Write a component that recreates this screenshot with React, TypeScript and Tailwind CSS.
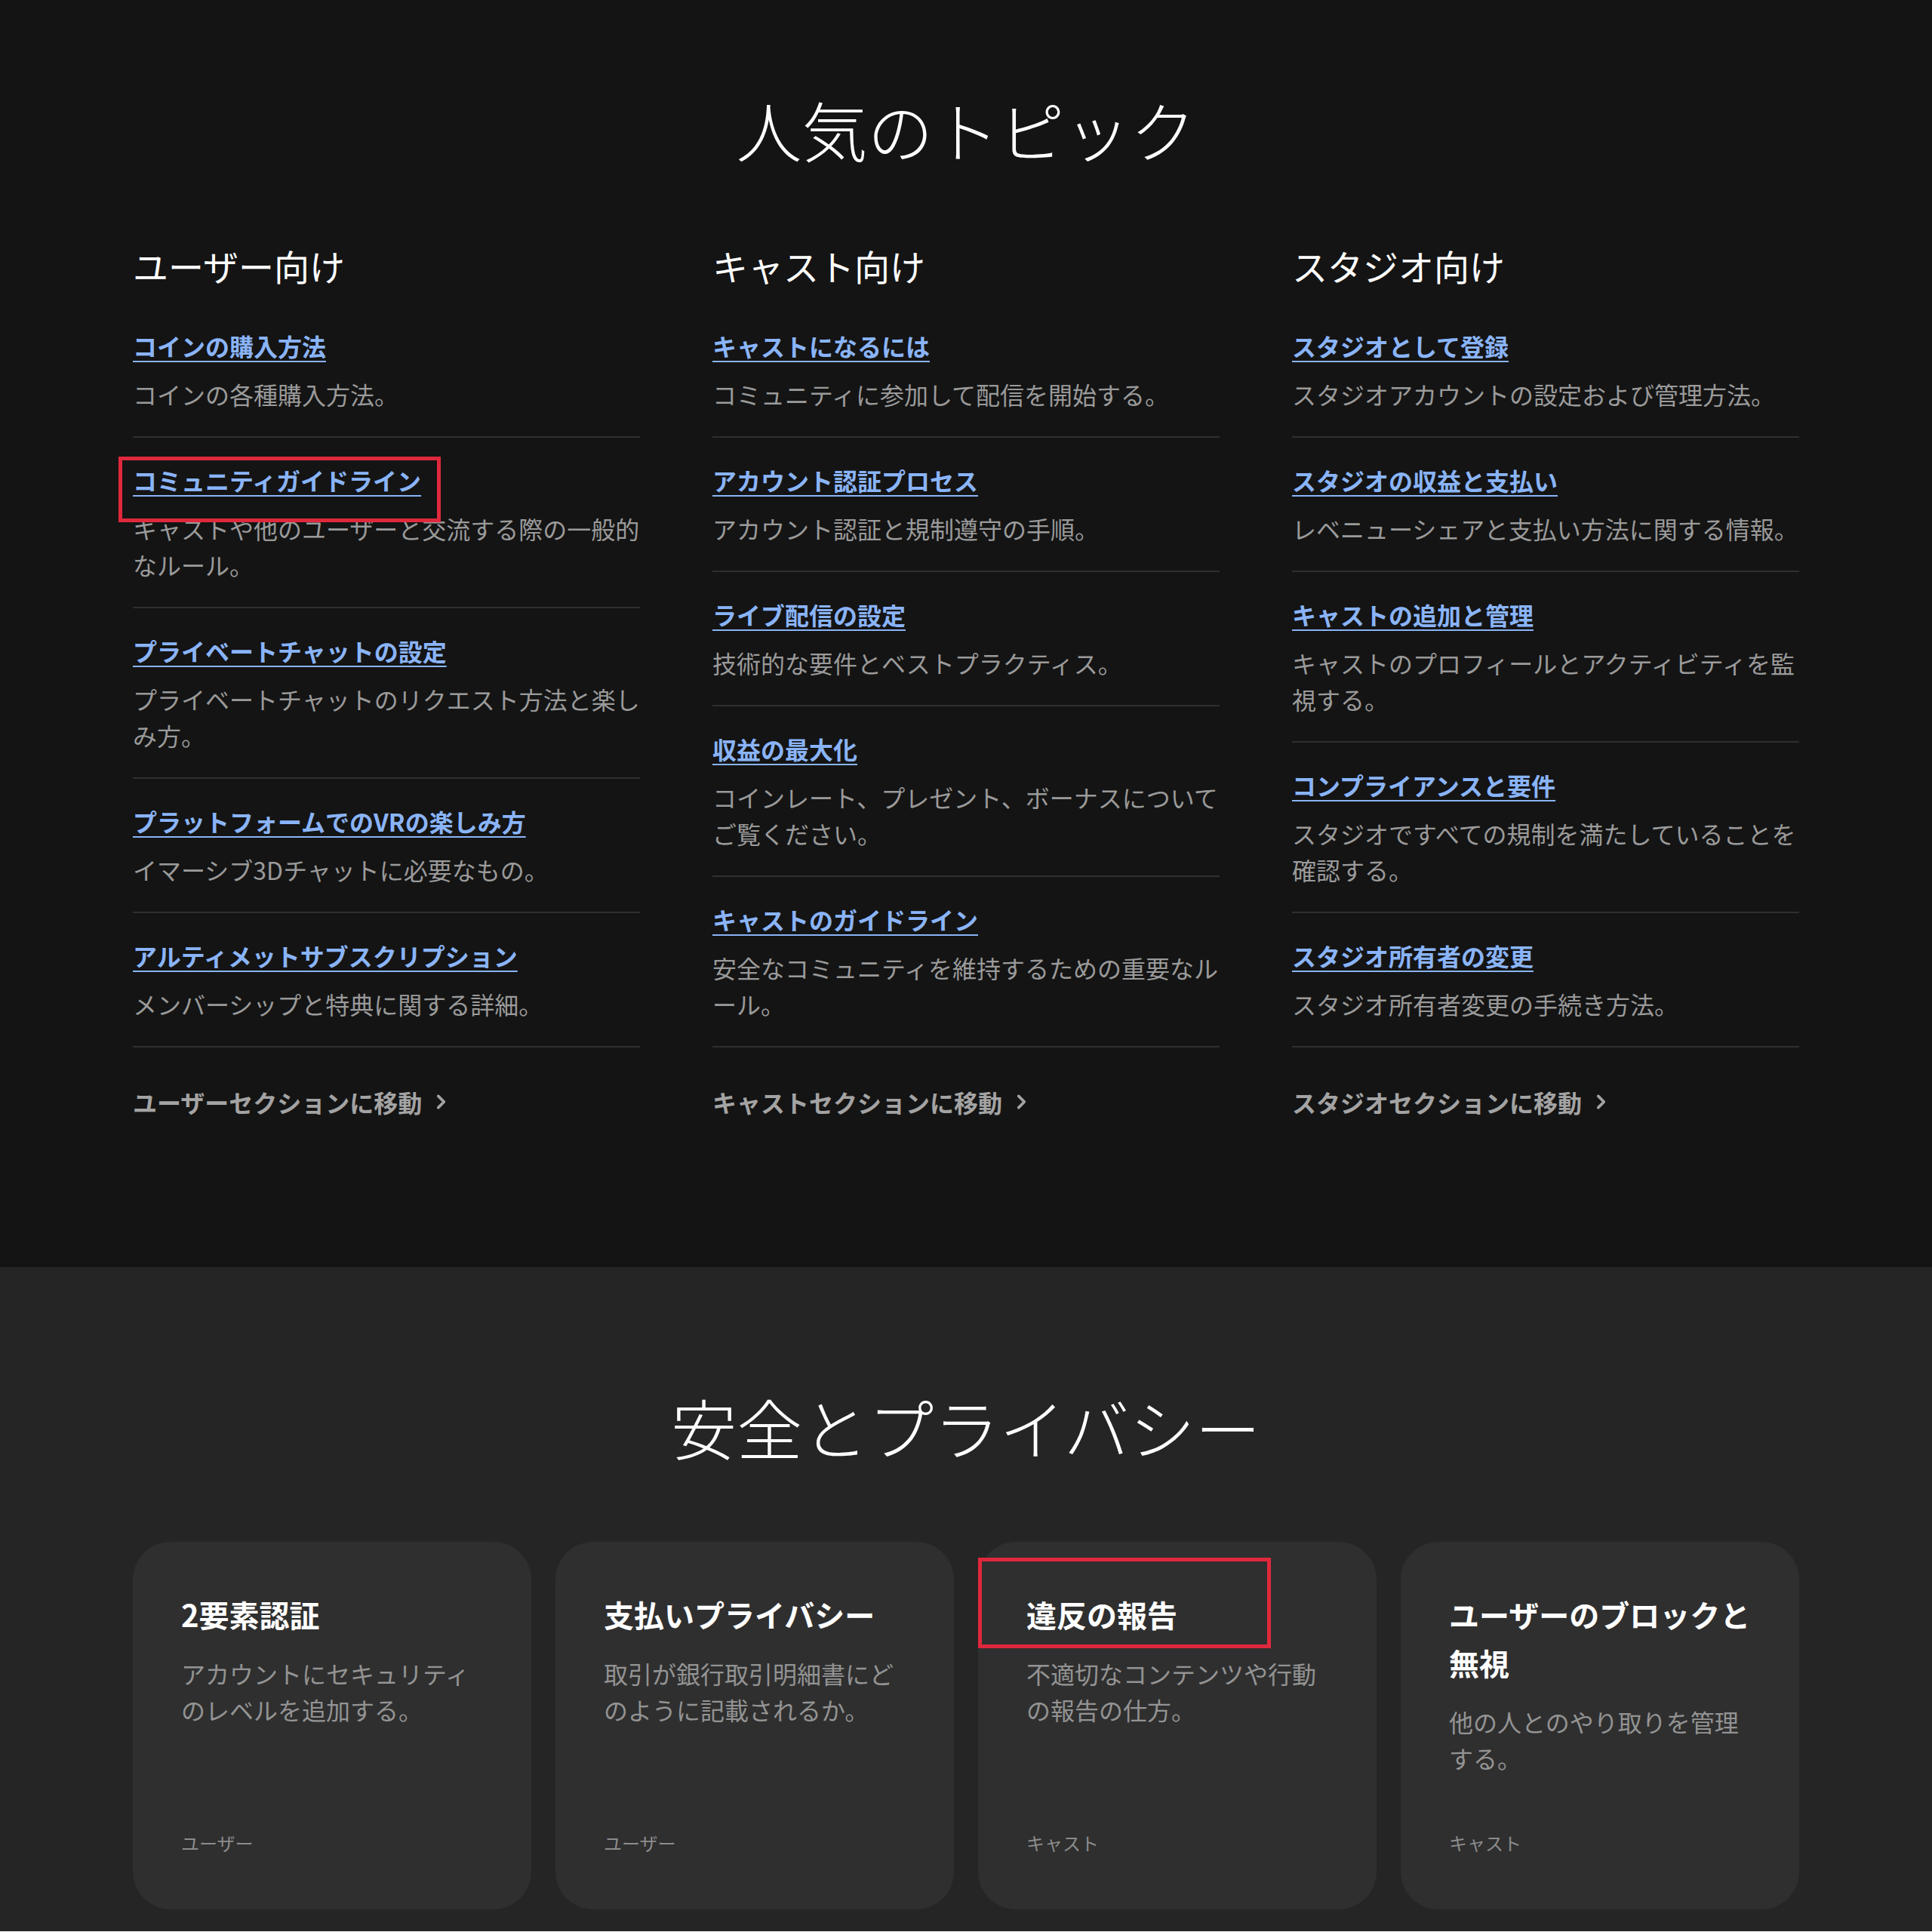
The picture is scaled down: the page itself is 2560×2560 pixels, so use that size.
import React from "react";

const FONT = '"Noto Sans CJK JP", "Noto Sans", sans-serif';

const COLUMNS = [
  {
    title: "ユーザー向け",
    footer: "ユーザーセクションに移動",
    items: [
      { link: "コインの購入方法", desc: "コインの各種購入方法。" },
      { link: "コミュニティガイドライン", desc: "キャストや他のユーザーと交流する際の一般的なルール。" },
      { link: "プライベートチャットの設定", desc: "プライベートチャットのリクエスト方法と楽しみ方。" },
      { link: "プラットフォームでのVRの楽しみ方", desc: "イマーシブ3Dチャットに必要なもの。" },
      { link: "アルティメットサブスクリプション", desc: "メンバーシップと特典に関する詳細。" },
    ],
  },
  {
    title: "キャスト向け",
    footer: "キャストセクションに移動",
    items: [
      { link: "キャストになるには", desc: "コミュニティに参加して配信を開始する。" },
      { link: "アカウント認証プロセス", desc: "アカウント認証と規制遵守の手順。" },
      { link: "ライブ配信の設定", desc: "技術的な要件とベストプラクティス。" },
      { link: "収益の最大化", desc: "コインレート、プレゼント、ボーナスについてご覧ください。" },
      { link: "キャストのガイドライン", desc: "安全なコミュニティを維持するための重要なルール。" },
    ],
  },
  {
    title: "スタジオ向け",
    footer: "スタジオセクションに移動",
    items: [
      { link: "スタジオとして登録", desc: "スタジオアカウントの設定および管理方法。" },
      { link: "スタジオの収益と支払い", desc: "レベニューシェアと支払い方法に関する情報。" },
      { link: "キャストの追加と管理", desc: "キャストのプロフィールとアクティビティを監視する。" },
      { link: "コンプライアンスと要件", desc: "スタジオですべての規制を満たしていることを確認する。" },
      { link: "スタジオ所有者の変更", desc: "スタジオ所有者変更の手続き方法。" },
    ],
  },
];

const CARDS = [
  { title: "2要素認証", desc: "アカウントにセキュリティのレベルを追加する。", tag: "ユーザー" },
  { title: "支払いプライバシー", desc: "取引が銀行取引明細書にどのように記載されるか。", tag: "ユーザー" },
  { title: "違反の報告", desc: "不適切なコンテンツや行動の報告の仕方。", tag: "キャスト" },
  { title: "ユーザーのブロックと無視", desc: "他の人とのやり取りを管理する。", tag: "キャスト" },
];

function Chevron() {
  return (
    <svg width="26" height="26" viewBox="0 0 24 24" fill="none" stroke="currentColor" strokeWidth="3.4" strokeLinecap="round" strokeLinejoin="round" className="ml-3">
      <path d="M9 5l7 7-7 7" />
    </svg>
  );
}

export default function App() {
  return (
    <div className="relative w-[2560px]" style={{ fontFamily: FONT }}>
      {/* Popular topics */}
      <section className="bg-[#141414] pt-[115px] pb-[195px]">
        <h1 className="text-center text-white text-[87px] font-light leading-[112px]">人気のトピック</h1>
        <div className="mx-auto mt-[95px] grid w-[2208px] grid-cols-3 gap-[96px]">
          {COLUMNS.map((col) => (
            <div key={col.title}>
              <h2 className="text-[47px] leading-[60px] text-white mb-[20px]">{col.title}</h2>
              <ul>
                {col.items.map((it) => (
                  <li key={it.link} className="border-b-2 border-[#2f2f2f] py-8">
                    <a className="block text-[32px] leading-[48px] font-bold text-[#8ab4f8] underline decoration-2 underline-offset-[6px]">
                      {it.link}
                    </a>
                    <p className="mt-4 text-[32px] leading-[48px] text-[#9a9a9a]">{it.desc}</p>
                  </li>
                ))}
              </ul>
              <a className="mt-12 flex items-center text-[32px] leading-[48px] font-bold text-[#a3a3a3]">
                {col.footer}
                <Chevron />
              </a>
            </div>
          ))}
        </div>
      </section>

      {/* Safety & privacy */}
      <section className="bg-[#252525] pt-[155px] pb-[29px]">
        <h1 className="text-center text-white text-[87px] font-light leading-[112px]">安全とプライバシー</h1>
        <div className="mx-auto mt-[97px] grid w-[2208px] grid-cols-4 gap-8">
          {CARDS.map((c) => (
            <div key={c.title} className="flex h-[487px] flex-col rounded-[50px] bg-[#2f2f2f] px-16 pt-16 pb-[70px]">
              <h3 className="text-[40px] leading-[64px] font-bold text-white">{c.title}</h3>
              <p className="mt-[22px] text-[32px] leading-[48px] text-[#939393]">{c.desc}</p>
              <span className="mt-auto text-[24px] leading-[36px] text-[#8c8c8c]">{c.tag}</span>
            </div>
          ))}
        </div>
      </section>

      {/* annotation highlights */}
      <div className="pointer-events-none absolute left-[157px] top-[605px] h-[87px] w-[427px] border-[5px] border-[#e0283c]" />
      <div className="pointer-events-none absolute left-[1296px] top-[2064px] h-[120px] w-[388px] border-[5px] border-[#e0283c]" />
    </div>
  );
}
